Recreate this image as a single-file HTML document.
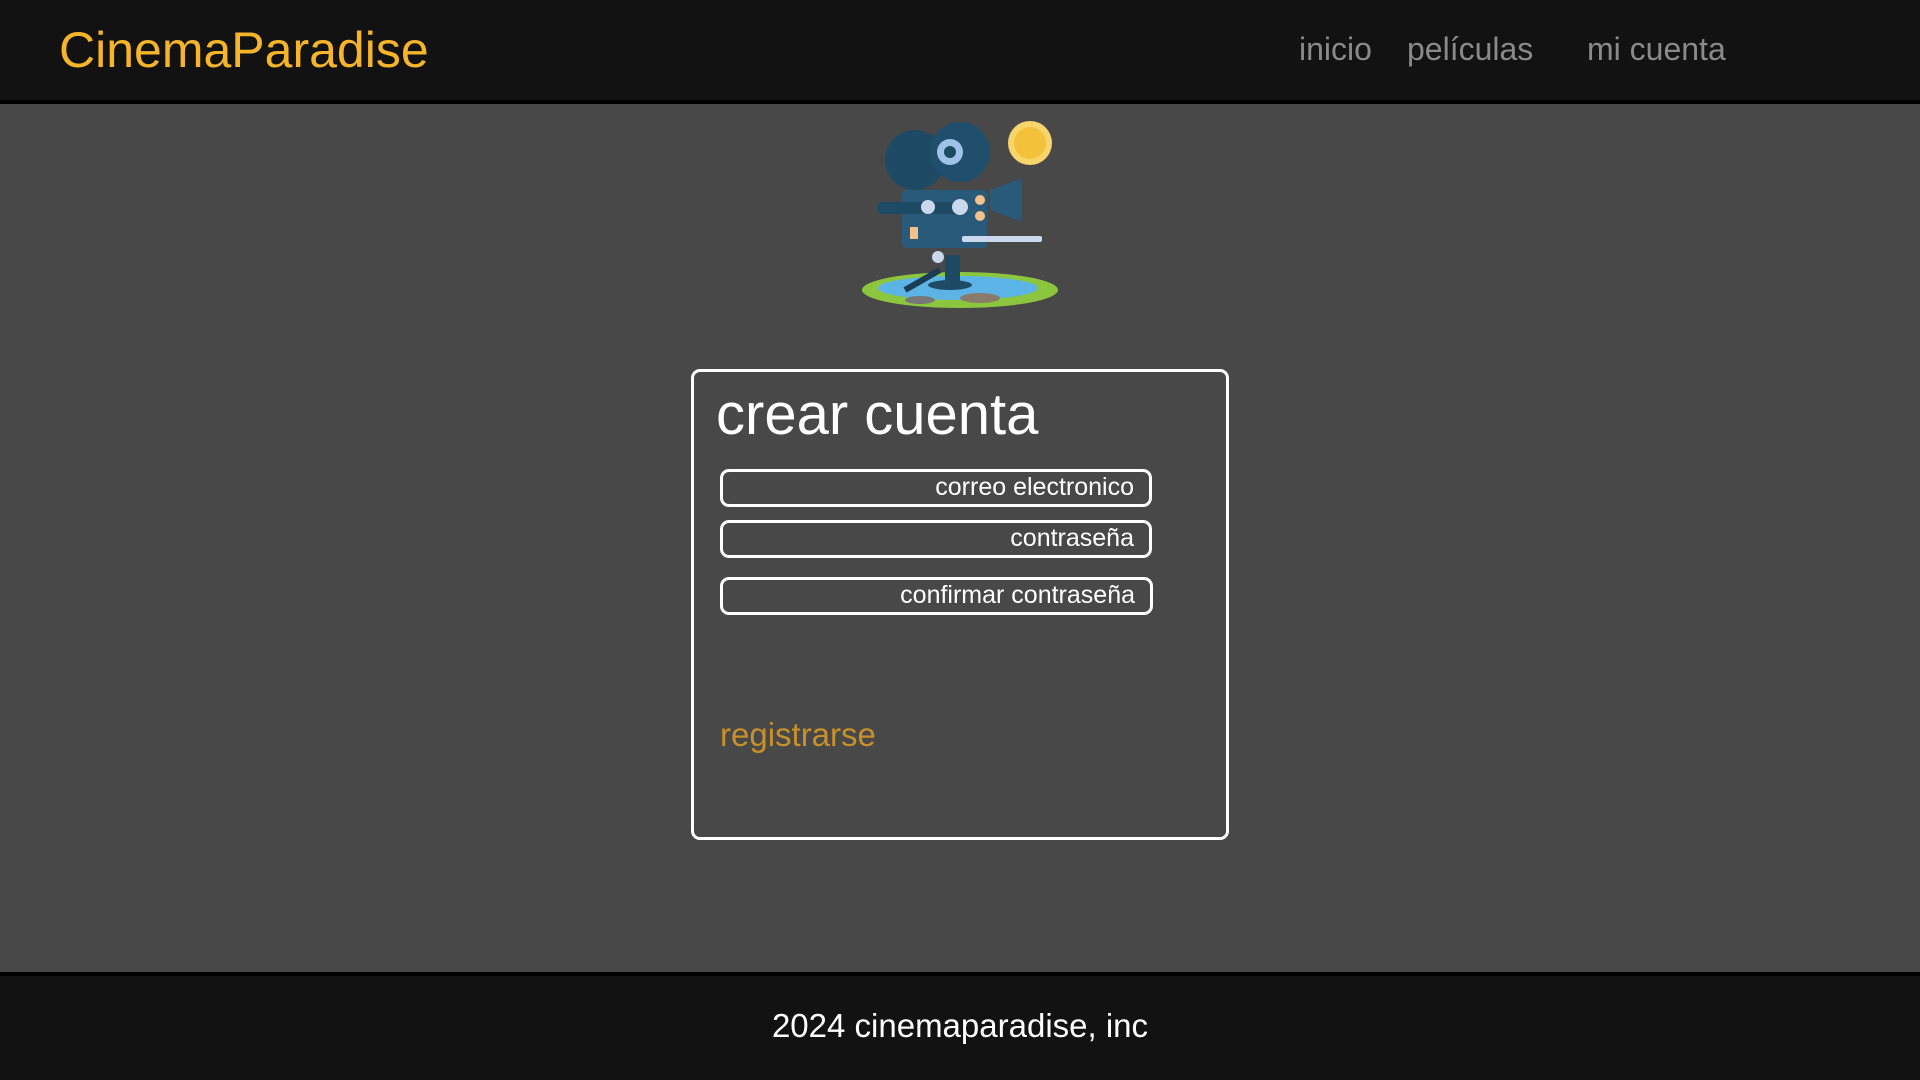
<!DOCTYPE html>
<html><head><meta charset="utf-8"><style>
*{margin:0;padding:0;box-sizing:border-box}
html,body{width:1920px;height:1080px;overflow:hidden;background:#484848;font-family:"Liberation Sans",Arial,sans-serif}
header{position:absolute;left:0;top:0;width:1920px;height:104px;background:#121212;border-bottom:4px solid #000}
.logo{position:absolute;left:59px;top:20px;font-size:50px;color:#f5b42a;line-height:60px}
.nav{position:absolute;top:29px;font-size:32px;color:#8a8a8a;line-height:40px}
.box{position:absolute;left:691px;top:369px;width:538px;height:471px;border:3px solid #fff;border-radius:9px}
h1{position:absolute;left:716px;top:381px;font-size:58px;font-weight:normal;color:#fff;line-height:68px}
.in{position:absolute;left:720px;width:432px;height:38px;border:3px solid #fff;border-radius:9px;color:#fff;font-size:25px;text-align:right;padding-right:15px;line-height:31px}
.reg{position:absolute;left:720px;top:716px;font-size:33px;color:#c8902a}
footer{position:absolute;left:0;top:972px;width:1920px;height:108px;background:#121212;border-top:4px solid #000;color:#fff;font-size:33px;text-align:center;line-height:100px}
</style></head><body>
<header>
<div class="logo">CinemaParadise</div>
<div class="nav" style="left:1299px">inicio</div>
<div class="nav" style="left:1407px">películas</div>
<div class="nav" style="left:1587px">mi cuenta</div>
</header>
<svg style="position:absolute;left:850px;top:110px" width="220" height="210" viewBox="0 0 220 210">
<ellipse cx="110" cy="180" rx="98" ry="18" fill="#8cc63f"/>
<ellipse cx="108" cy="178" rx="80" ry="12" fill="#5bb4e5"/>
<ellipse cx="130" cy="188" rx="20" ry="5" fill="#8a7a6a"/>
<ellipse cx="70" cy="190" rx="15" ry="4" fill="#777"/>
<circle cx="180" cy="33" r="22" fill="#f7d56b"/>
<circle cx="180" cy="33" r="16" fill="#f4c23a"/>
<path d="M90 160 L55 180" stroke="#1a3d55" stroke-width="6"/>
<rect x="95" y="145" width="15" height="30" fill="#1e4a66"/>
<ellipse cx="100" cy="175" rx="22" ry="5" fill="#1e4a66"/>
<circle cx="65" cy="50" r="30" fill="#1e4a66"/>
<circle cx="110" cy="42" r="30" fill="#1f4f6c"/>
<circle cx="100" cy="42" r="13" fill="#9ec3e6"/><circle cx="100" cy="42" r="6" fill="#1e4a66"/>
<rect x="52" y="80" width="85" height="58" rx="4" fill="#2a5a7a"/>
<rect x="28" y="92" width="90" height="12" rx="4" fill="#1e4a66"/>
<circle cx="78" cy="97" r="7" fill="#c9d8ec"/><circle cx="110" cy="97" r="8" fill="#c9d8ec"/>
<circle cx="130" cy="90" r="5" fill="#f2c18c"/><circle cx="130" cy="106" r="5" fill="#f2c18c"/>
<rect x="60" y="117" width="8" height="12" fill="#f2c18c"/>
<path d="M140 80 L172 68 L172 112 L140 100Z" fill="#2a5a7a"/>
<rect x="112" y="126" width="80" height="6" rx="2" fill="#c9d8ec"/>
<circle cx="88" cy="147" r="6" fill="#c9d8ec"/>
</svg>
<div class="box"></div>
<h1>crear cuenta</h1>
<div class="in" style="top:469px">correo electronico</div>
<div class="in" style="top:520px">contraseña</div>
<div class="in" style="top:577px;width:433px">confirmar contraseña</div>
<div class="reg">registrarse</div>
<footer>2024 cinemaparadise, inc</footer>
</body></html>
